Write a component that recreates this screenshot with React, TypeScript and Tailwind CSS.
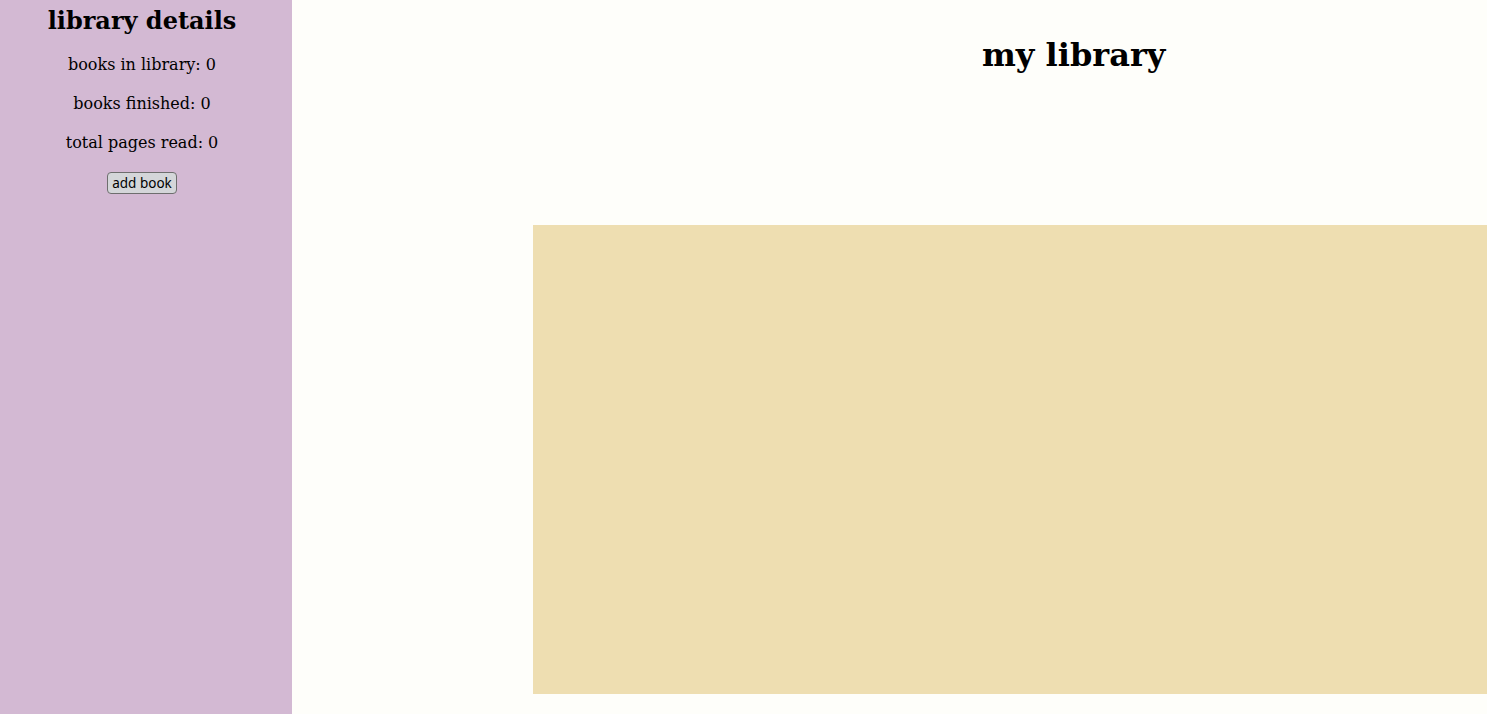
export default function App() {
  return (
    <div className="flex h-[714px] w-full overflow-hidden bg-[#fefefa] font-['DejaVu_Serif',serif] text-black">
      <aside className="flex w-[292px] shrink-0 flex-col items-center bg-[#d3b9d3] pr-[8px]">
        <h2 className="mt-[5px] text-[24px] font-bold leading-[32px]">library details</h2>
        <p className="mt-[18px] text-[16px] leading-[20px]">books in library: 0</p>
        <p className="mt-[19px] text-[16px] leading-[20px]">books finished: 0</p>
        <p className="mt-[19px] text-[16px] leading-[20px]">total pages read: 0</p>
        <button className="mt-[19px] h-[22px] rounded-[4px] border border-[#6e6e6e] bg-[#d4d6d9] px-[4px] font-['Noto_Sans',sans-serif] text-[13.5px] leading-[18px]">
          add book
        </button>
      </aside>
      <main className="flex flex-1 flex-col">
        <div className="flex h-[225px] shrink-0 justify-start pl-[690px]">
          <h1 className="mt-[35px] text-[32px] font-bold leading-[40px]">my library</h1>
        </div>
        <div className="ml-[241px] h-[469px] bg-[#eedeb1]" />
      </main>
    </div>
  );
}
